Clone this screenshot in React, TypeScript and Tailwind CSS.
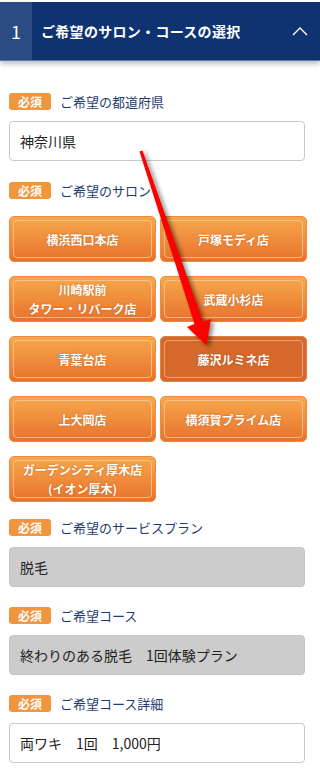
import React from "react";

const FONT = { fontFamily: '"Noto Sans CJK JP", "Noto Sans", sans-serif' };

function Label({ text }: { text: string }) {
  return (
    <div className="flex items-center h-[17px]">
      <span className="flex items-center justify-center w-[42px] h-[17px] rounded-[3px] bg-[#f0963e] text-white text-[12px] font-bold leading-none">
        必須
      </span>
      <span className="ml-[9px] text-[13px] leading-none text-[#1e3c72]">{text}</span>
    </div>
  );
}

function Field({ text, gray }: { text: string; gray?: boolean }) {
  return (
    <div
      className={
        "mt-[11px] w-[296px] h-[40px] rounded-[4px] border flex items-center pl-[10px] text-[14px] text-[#222] " +
        (gray ? "bg-[#cccccc] border-[#c4c4c4]" : "bg-white border-[#c8c8c8]")
      }
    >
      {text}
    </div>
  );
}

const salons: { name: string[]; selected?: boolean }[] = [
  { name: ["横浜西口本店"] },
  { name: ["戸塚モディ店"] },
  { name: ["川崎駅前", "タワー・リバーク店"] },
  { name: ["武蔵小杉店"] },
  { name: ["青葉台店"] },
  { name: ["藤沢ルミネ店"], selected: true },
  { name: ["上大岡店"] },
  { name: ["横須賀プライム店"] },
  { name: ["ガーデンシティ厚木店", "(イオン厚木)"] },
];

function SalonButton({ name, selected }: { name: string[]; selected?: boolean }) {
  return (
    <div
      className={
        "relative h-[46px] rounded-[5px] border flex flex-col items-center justify-center text-white text-[12px] font-bold leading-[19px] [text-shadow:0_0_2px_rgba(150,60,0,0.5)] " +
        (selected
          ? "bg-[#d4692b] border-[#e0803a]"
          : "bg-gradient-to-b from-[#f6a84b] to-[#e8712d] border-[#ee8a3c]")
      }
    >
      <span
        className={
          "absolute inset-[3px] rounded-[4px] border " +
          (selected ? "border-[#e9a077]" : "border-[#fbc894]/80")
        }
      />
      {name.map((n) => (
        <span key={n} className="relative">
          {n}
        </span>
      ))}
    </div>
  );
}

export default function App() {
  return (
    <div className="relative w-[320px] h-[768px] bg-white overflow-hidden" style={FONT}>
      {/* Header */}
      <div className="mt-[2px] h-[59px] flex bg-[#0f3270] border-b border-[#5a78aa] shadow-[0_3px_5px_rgba(0,0,0,0.25)]">
        <div className="w-[32px] bg-[#2b4c83] flex items-center justify-center text-white text-[18px] leading-none">
          1
        </div>
        <div className="flex-1 flex items-center pl-[9px] text-white text-[14px] font-bold tracking-[0.3px]">
          ご希望のサロン・コースの選択
        </div>
        <div className="w-[40px] flex items-center justify-center">
          <svg width="16" height="9" viewBox="0 0 16 9" className="mt-[1px]">
            <polyline points="1,8 8,1 15,8" fill="none" stroke="white" strokeWidth="1.4" />
          </svg>
        </div>
      </div>

      {/* Content */}
      <div className="pl-[9px] pt-[32px]">
        <Label text="ご希望の都道府県" />
        <Field text="神奈川県" />

        <div className="mt-[21px]">
          <Label text="ご希望のサロン" />
        </div>
        <div className="mt-[17px] w-[298px] grid grid-cols-2 gap-x-[4px] gap-y-[14px]">
          {salons.map((s) => (
            <SalonButton key={s.name.join()} name={s.name} selected={s.selected} />
          ))}
        </div>

        <div className="mt-[17px]">
          <Label text="ご希望のサービスプラン" />
        </div>
        <Field text="脱毛" gray />

        <div className="mt-[20px]">
          <Label text="ご希望コース" />
        </div>
        <Field text="終わりのある脱毛　1回体験プラン" gray />

        <div className="mt-[20px]">
          <Label text="ご希望コース詳細" />
        </div>
        <Field text="両ワキ　1回　1,000円" />
      </div>

      {/* Red arrow annotation */}
      <svg
        className="absolute left-0 top-0 pointer-events-none drop-shadow-[3px_2px_2px_rgba(0,0,0,0.45)]"
        width="320"
        height="768"
        viewBox="0 0 320 768"
      >
        <polygon
          points="139.5,151.5 142.5,150.5 203,321.5 211,319 206.5,345.5 187,327 194.5,324"
          fill="#ff0000"
        />
      </svg>
    </div>
  );
}
